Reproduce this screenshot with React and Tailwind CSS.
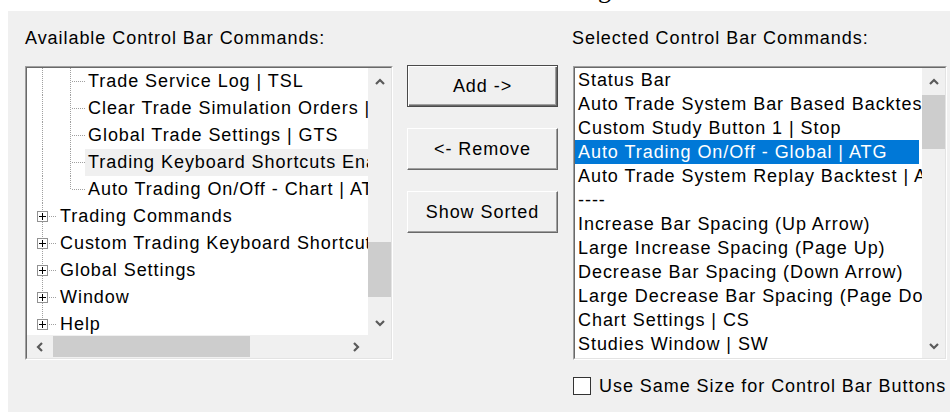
import React from "react";

const treeRows = [
  { text: "Trade Service Log | TSL", level: 2 },
  { text: "Clear Trade Simulation Orders | CTSO", level: 2 },
  { text: "Global Trade Settings | GTS", level: 2 },
  { text: "Trading Keyboard Shortcuts Enabled | TKS", level: 2, hover: true },
  { text: "Auto Trading On/Off - Chart | ATC", level: 2, lastChild: true },
  { text: "Trading Commands", level: 1 },
  { text: "Custom Trading Keyboard Shortcuts", level: 1 },
  { text: "Global Settings", level: 1 },
  { text: "Window", level: 1 },
  { text: "Help", level: 1, last: true },
];

const selectedRows = [
  "Status Bar",
  "Auto Trade System Bar Based Backtest | ATBB",
  "Custom Study Button 1 | Stop",
  "Auto Trading On/Off - Global | ATG",
  "Auto Trade System Replay Backtest | ATRB",
  "----",
  "Increase Bar Spacing (Up Arrow)",
  "Large Increase Spacing (Page Up)",
  "Decrease Bar Spacing (Down Arrow)",
  "Large Decrease Bar Spacing (Page Down)",
  "Chart Settings | CS",
  "Studies Window | SW",
];

function Chevron({ dir }) {
  const horiz = dir === "left" || dir === "right";
  const pts = {
    up: "1,6 5,2 9,6",
    down: "1,2 5,6 9,2",
    left: "6,1 2,5 6,9",
    right: "2,1 6,5 2,9",
  }[dir];
  return (
    <svg width={horiz ? 8 : 10} height={horiz ? 10 : 8} viewBox={horiz ? "0 0 8 10" : "0 0 10 8"}>
      <polyline points={pts} fill="none" stroke="#5a5a5a" strokeWidth="2.2" />
    </svg>
  );
}

function VScroll({ thumbClass }) {
  return (
    <div className="flex w-[23px] flex-col bg-[#f0f0f0]">
      <div className="flex h-[27px] items-center justify-center">
        <Chevron dir="up" />
      </div>
      <div className="flex-1">
        <div className={`bg-[#cdcdcd] ${thumbClass}`} />
      </div>
      <div className="flex h-[25px] items-center justify-center">
        <Chevron dir="down" />
      </div>
    </div>
  );
}

// dotted connector lines for a tree row
function Gutter({ row }) {
  const dot = { stroke: "#a0a0a0", strokeWidth: 1, strokeDasharray: "1 1" };
  if (row.level === 2) {
    return (
      <svg width="58" height="27" className="shrink-0">
        <line x1="15.5" y1="0" x2="15.5" y2="27" {...dot} />
        <line x1="43.5" y1="0" x2="43.5" y2={row.lastChild ? 14 : 27} {...dot} />
        <line x1="45" y1="13.5" x2="58" y2="13.5" {...dot} />
      </svg>
    );
  }
  return (
    <svg width="30" height="27" className="shrink-0">
      <line x1="15.5" y1="0" x2="15.5" y2="8" {...dot} />
      {!row.last && <line x1="15.5" y1="19" x2="15.5" y2="27" {...dot} />}
      <rect x="10.5" y="8.5" width="10" height="10" fill="white" stroke="#919191" />
      <line x1="12" y1="13.5" x2="19" y2="13.5" stroke="#000" />
      <line x1="15.5" y1="10" x2="15.5" y2="17" stroke="#000" />
      <line x1="22" y1="13.5" x2="30" y2="13.5" {...dot} />
    </svg>
  );
}

function SunkenBox({ className, children }) {
  return (
    <div className={`border border-t-[#a0a0a0] border-l-[#a0a0a0] border-r-white border-b-white ${className}`}>
      <div className="flex h-full flex-col border border-t-[#696969] border-l-[#696969] border-r-[#e3e3e3] border-b-[#e3e3e3]">
        {children}
      </div>
    </div>
  );
}

function DlgButton({ label, isDefault }) {
  return (
    <button
      type="button"
      className={`h-[42px] w-[151px] bg-[#f0f0f0] text-black ${
        isDefault
          ? "border border-[#4a4a4a] shadow-[inset_1px_1px_0_#ffffff,inset_-1px_-1px_0_#696969,inset_-2px_-2px_0_#a0a0a0]"
          : "border border-t-white border-l-white border-r-[#696969] border-b-[#696969] shadow-[inset_-1px_-1px_0_#a0a0a0]"
      }`}
    >
      {label}
    </button>
  );
}

export default function App() {
  return (
    <div className="flex h-[412px] w-[950px] flex-col overflow-hidden bg-white font-['Liberation_Sans',Arial,sans-serif] text-[18px] tracking-[0.95px] text-black">
      {/* window title strip, mostly scrolled off */}
      <div className="h-[11px] shrink-0 overflow-hidden">
        <div className="-mt-[23px] ml-[598px] font-['Liberation_Serif',serif] text-[26px] leading-none">g</div>
      </div>

      <div className="ml-[8px] flex flex-1 items-start bg-[#f0f0f0] pl-[17px] pt-[16px]">
        {/* available commands tree */}
        <div className="flex w-[368px] flex-col">
          <div className="h-[22px] leading-[22px] whitespace-nowrap">Available Control Bar Commands:</div>
          <SunkenBox className="mt-[17px] h-[294px] w-[368px]">
            <div className="flex min-h-0 flex-1">
              <div className="flex-1 overflow-hidden bg-white">
                {treeRows.map((row) => (
                  <div key={row.text} className="flex h-[27px] items-center whitespace-nowrap">
                    <Gutter row={row} />
                    <span className={`pl-[3px] leading-[27px] ${row.hover ? "flex-1 bg-[#f0f0f0]" : ""}`}>{row.text}</span>
                  </div>
                ))}
              </div>
              <VScroll thumbClass="mt-[147px] h-[55px]" />
            </div>
            <div className="flex h-[23px] bg-[#f0f0f0]">
              <div className="flex flex-1 items-center">
                <div className="flex h-full w-[25px] items-center justify-center">
                  <Chevron dir="left" />
                </div>
                <div className="ml-px h-[21px] w-[197px] bg-[#cdcdcd]" />
                <div className="ml-auto flex h-full w-[25px] items-center justify-center">
                  <Chevron dir="right" />
                </div>
              </div>
              <div className="w-[23px]" />
            </div>
          </SunkenBox>
        </div>

        {/* add / remove buttons */}
        <div className="ml-[14px] mt-[38px] flex flex-col gap-[21px]">
          <DlgButton label="Add ->" isDefault />
          <DlgButton label="<- Remove" />
          <DlgButton label="Show Sorted" />
        </div>

        {/* selected commands list */}
        <div className="ml-[15px] flex w-[374px] flex-col">
          <div className="-ml-px h-[22px] leading-[22px] whitespace-nowrap">Selected Control Bar Commands:</div>
          <SunkenBox className="mt-[17px] h-[294px] w-[374px]">
            <div className="flex min-h-0 flex-1">
              <div className="flex-1 overflow-hidden bg-white">
                {selectedRows.map((text, i) => (
                  <div
                    key={text}
                    className={`mr-[3px] h-[24px] pl-[3px] leading-[24px] whitespace-nowrap ${
                      i === 3 ? "bg-[#0078d7] text-white" : ""
                    }`}
                  >
                    {text}
                  </div>
                ))}
              </div>
              <VScroll thumbClass="mt-[0px] h-[54px]" />
            </div>
          </SunkenBox>
          <label className="mt-[17px] flex h-[18px] items-center gap-[8px] whitespace-nowrap">
            <span className="h-[18px] w-[18px] shrink-0 border border-[#333333] bg-white" />
            <span>Use Same Size for Control Bar Buttons</span>
          </label>
        </div>
      </div>
    </div>
  );
}
